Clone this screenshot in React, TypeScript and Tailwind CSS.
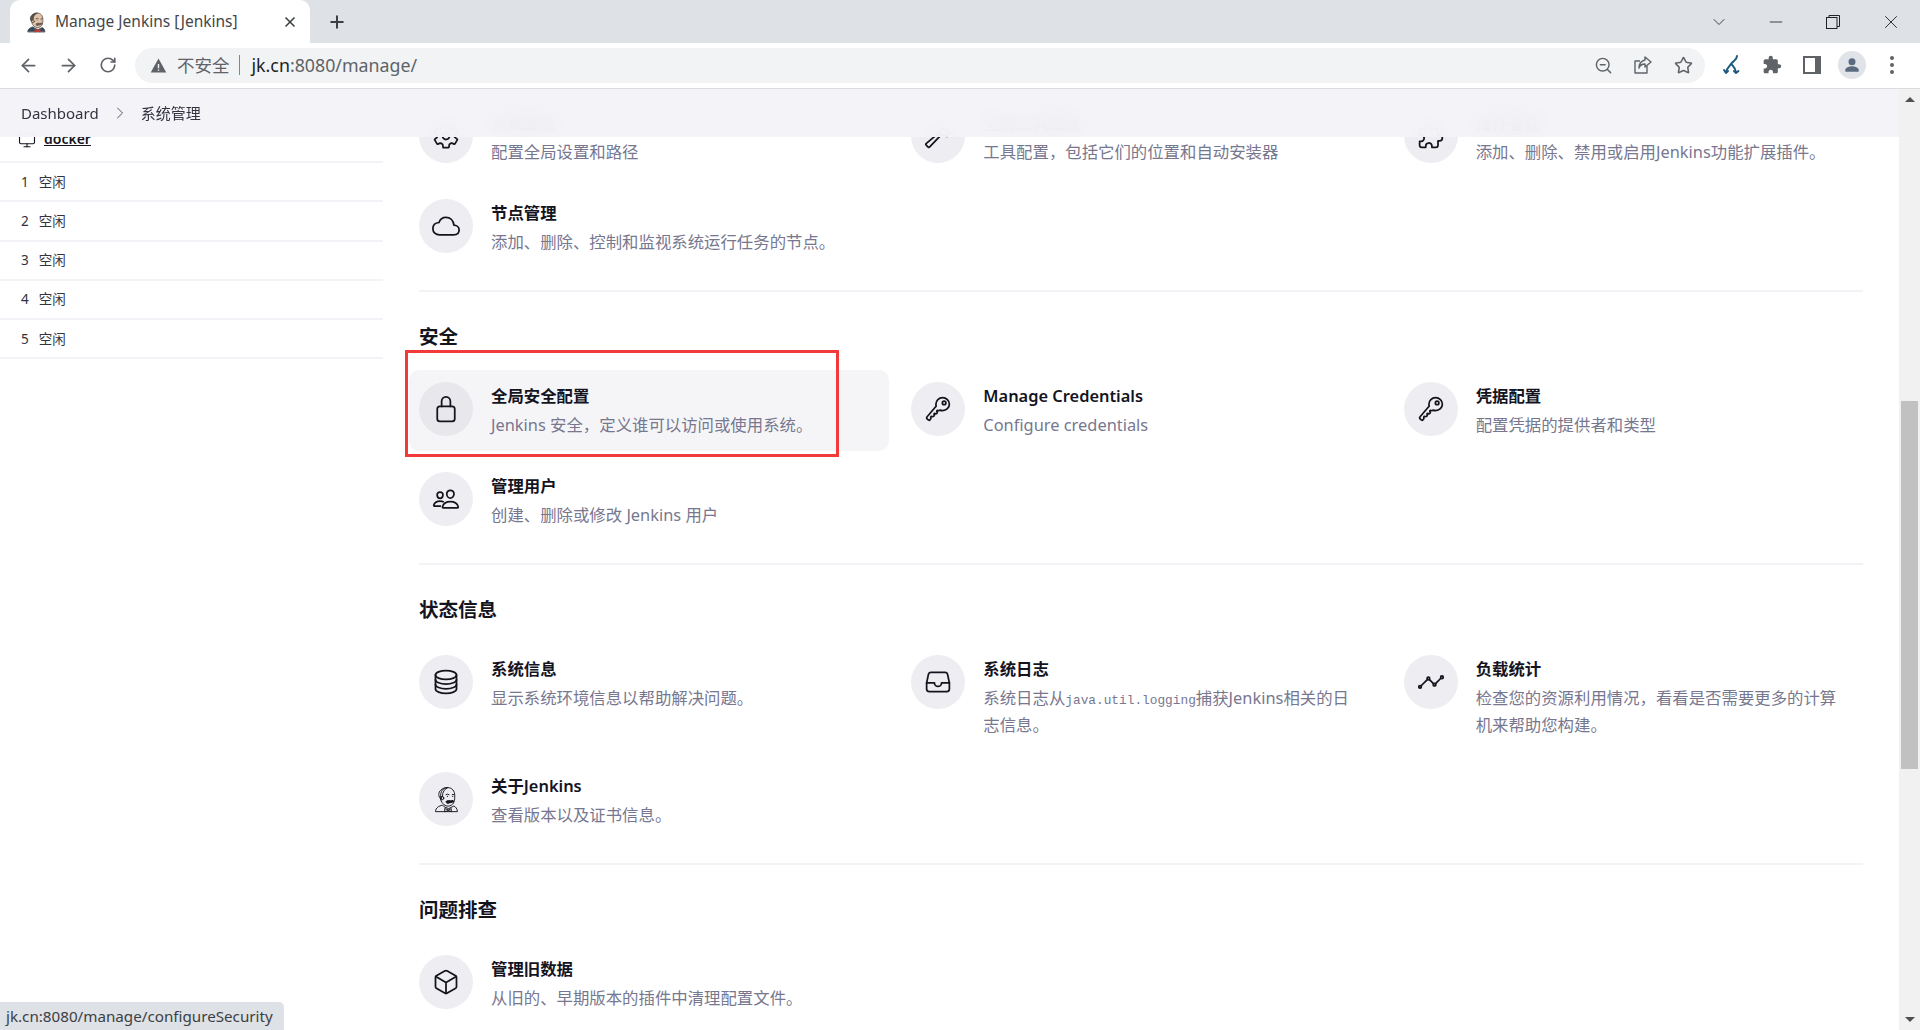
import type { ReactNode } from 'react';
import { ArrowLeft, ArrowRight, ChevronDown, ChevronRight, Minus, Monitor, Plus, RotateCw, Star, X, ZoomOut } from 'lucide-react';

const Ion = ({ children }: { children: ReactNode }) => (
  <svg viewBox="0 0 512 512" className="size-7" fill="none" stroke="#14141f" strokeWidth={32} strokeLinecap="round" strokeLinejoin="round">
    {children}
  </svg>
);

const GearIcon = () => (
  <Ion>
    <path d="M262.29 192.31a64 64 0 1057.4 57.4 64.13 64.13 0 00-57.4-57.4zM416.39 256a154.34 154.34 0 01-1.53 20.79l45.21 35.46a10.81 10.81 0 012.45 13.75l-42.77 74a10.81 10.81 0 01-13.14 4.59l-44.9-18.08a16.11 16.11 0 00-15.17 1.75A164.48 164.48 0 01325 400.8a15.94 15.94 0 00-8.82 12.14l-6.73 47.89a11.08 11.08 0 01-10.68 9.17h-85.54a11.11 11.11 0 01-10.69-8.87l-6.72-47.82a16.07 16.07 0 00-9-12.22 155.3 155.3 0 01-21.46-12.57 16 16 0 00-15.11-1.71l-44.89 18.07a10.81 10.81 0 01-13.14-4.58l-42.77-74a10.8 10.8 0 012.45-13.75l38.21-30a16.05 16.05 0 006-14.08c-.36-4.17-.58-8.33-.58-12.5s.21-8.27.58-12.35a16 16 0 00-6.07-13.94l-38.19-30A10.81 10.81 0 0149.48 186l42.77-74a10.81 10.81 0 0113.14-4.59l44.9 18.08a16.11 16.11 0 0015.17-1.75A164.48 164.48 0 01187 111.2a15.94 15.94 0 008.82-12.14l6.73-47.89A11.08 11.08 0 01213.23 42h85.54a11.11 11.11 0 0110.69 8.87l6.72 47.82a16.07 16.07 0 009 12.22 155.3 155.3 0 0121.46 12.57 16 16 0 0015.11 1.71l44.89-18.07a10.81 10.81 0 0113.14 4.58l42.77 74a10.8 10.8 0 01-2.45 13.75l-38.21 30a16.05 16.05 0 00-6.07 14.08c.33 4.14.55 8.3.55 12.47z" />
  </Ion>
);

const HammerIcon = () => (
  <Ion>
    <path d="M240 225L38 396a16 16 0 00-1 24l39 39a16 16 0 0024-1L287 262" />
    <path d="M240 225l47 37 40-40-47-47zM280 175l40-70 90 40 60 70-50 50-60-30-33 7" />
  </Ion>
);

const PuzzleIcon = () => (
  <Ion>
    <path d="M413.66 246.1H386a2 2 0 01-2-2v-77.24A38.86 38.86 0 00345.14 128H267.9a2 2 0 01-2-2V98.34c0-27.14-21.5-49.86-48.64-50.33a49.53 49.53 0 00-50.4 49.51V126a2 2 0 01-2 2H87.62A39.74 39.74 0 0048 167.62V238a2 2 0 002 2h26.91c29.37 0 53.68 25.48 54.09 54.85.42 29.87-23.51 57.15-53.29 57.15H50a2 2 0 00-2 2v70.38A39.74 39.74 0 0087.62 464H158a2 2 0 002-2v-20.93c0-30.28 24.75-56.35 55-57.06 30.1-.7 57 20.31 57 50.28V462a2 2 0 002 2h71.14A38.86 38.86 0 00384 425.14v-78a2 2 0 012-2h28.48c27.63 0 49.52-22.67 49.52-50.4s-23.2-48.64-50.34-48.64z" />
  </Ion>
);

const CloudIcon = () => (
  <Ion>
    <path d="M400 240c-8.89-89.54-71-144-144-144-69 0-113.44 48.2-128 96C68 198 16 235.59 16 304c0 66 54 112 120 112h260c55 0 100-27.44 100-88 0-59.82-53-85.76-96-88z" />
  </Ion>
);

const LockIcon = () => (
  <Ion>
    <path d="M336 208v-95a80 80 0 00-160 0v95" />
    <rect x="96" y="208" width="320" height="272" rx="48" ry="48" />
  </Ion>
);

const KeyIcon = () => (
  <Ion>
    <path d="M218.1 167.17c0 13 0 25.6 4.1 37.4-43.1 50.6-156.9 184.3-167.5 194.5a20.17 20.17 0 00-6.7 15c0 8.5 5.2 16.7 9.6 21.3 6.6 6.9 34.8 33 40 28 15.4-15 18.5-19 24.8-25.2 9.5-9.3-1-28.3 2.3-36s6.8-9.2 12.5-10.4 15.8 2.9 23.7 3c8.3.1 12.8-3.4 19-9.2 5-4.6 8.6-8.9 8.7-15.6.2-9-12.8-20.9-3.1-30.4s23.7 6.2 34 5 22.8-15.5 24.1-21.6-11.7-21.8-9.7-30.7c.7-3 6.8-10 11.4-11s25 6.9 29.6 5.9c5.6-1.2 12.1-7.1 17.4-10.4 15.5 6.7 29.6 9.4 47.7 9.4 68.5 0 124-53.4 124-119.2S408.5 48 340 48s-121.9 53.37-121.9 119.17zM400 144a32 32 0 11-32-32 32 32 0 0132 32z" />
  </Ion>
);

const PeopleIcon = () => (
  <Ion>
    <path d="M402 168c-2.93 40.67-33.1 72-66 72s-63.12-31.32-66-72c-3-42.31 26.37-72 66-72s69 30.46 66 72z" />
    <path d="M336 304c-65.17 0-127.84 32.37-143.54 95.41-2.08 8.34 3.15 16.59 11.72 16.59h263.65c8.57 0 13.77-8.25 11.72-16.59C463.85 335.36 401.18 304 336 304z" />
    <path d="M200 185.94c-2.34 32.48-26.72 58.06-53 58.06s-50.7-25.57-53-58.06C91.61 152.15 115.34 128 147 128s55.39 24.77 53 57.94z" />
    <path d="M206 306c-18.05-8.27-37.93-11.45-59-11.45-52 0-102.1 25.85-114.65 76.2-1.65 6.66 2.53 13.25 9.37 13.25H154" />
  </Ion>
);

const ServerIcon = () => (
  <Ion>
    <ellipse cx="256" cy="128" rx="192" ry="80" />
    <path d="M448 214c0 44.18-86 80-192 80S64 258.18 64 214" />
    <path d="M448 300c0 44.18-86 80-192 80S64 344.18 64 300" />
    <path d="M64 127.24v257.52C64 428.52 150 464 256 464s192-35.48 192-79.24V127.24" />
  </Ion>
);

const TrayIcon = () => (
  <Ion>
    <path d="M384 80H128c-26 0-43 14-48 40L48 272v112a48.14 48.14 0 0048 48h320a48.14 48.14 0 0048-48V272l-32-152c-5-27-23-40-48-40z" />
    <path d="M48 272h144M320 272h144M192 272a64 64 0 00128 0" />
  </Ion>
);

const AnalyticsIcon = () => (
  <Ion>
    <path d="M344 280l88-88M232 216l64 64M80 320l104-104" />
    <circle cx="456" cy="168" r="24" />
    <circle cx="320" cy="304" r="24" />
    <circle cx="208" cy="192" r="24" />
    <circle cx="56" cy="344" r="24" />
  </Ion>
);

const CubeIcon = () => (
  <Ion>
    <path d="M448 341.37V170.61A32 32 0 00432.11 143l-152-88.46a47.94 47.94 0 00-48.24 0L79.89 143A32 32 0 0064 170.61v170.76A32 32 0 0079.89 369l152 88.46a48 48 0 0048.24 0l152-88.46A32 32 0 00448 341.37z" />
    <path d="M69 153.99l187 110 187-110M256 463.99v-200" />
  </Ion>
);

// butler head, line version for the page and coloured version for the tab
const JenkinsIcon = ({ color, className }: { color?: boolean; className: string }) => (
  <svg viewBox="0 0 32 32" className={className} fill="none" stroke={color ? '#4a4a4a' : '#14141f'} strokeWidth={1.1} strokeLinecap="round" strokeLinejoin="round">
    <path d="M4 30c0-4 4-6 8-7l2 2 5 2 4-2 2-1c2 1 4 3 4 6z" fill={color ? '#2f4a5c' : 'none'} />
    <path d="M10 14C9 7 13 3 18 3c5 0 8 4 8 9 0 5 0 10-6 12-5 1-9-3-10-7z" fill={color ? '#e5c3a6' : 'none'} />
    <path d="M10 16C7 14 7 8 10 6c2-2.500 5-3 8-3-4 2-6 5-6 9z" fill={color ? '#55504c' : 'none'} />
    <circle cx="11.500" cy="15" r="2" fill={color ? '#e5c3a6' : 'none'} />
    <path d="M16 11q2-1.500 3.500 0M23 11q1-1 2 0M17.500 13h.4M23.500 13h.4" />
    <path d="M16 19c2-2 4-1 5-1s3-1 4 .5c-2 2-5 1.500-7 2.500z" fill={color ? '#6b5a50' : '#14141f'} />
    <path d="M15 27l3.500 1.500L22 27v3.500L18.500 29 15 30.500z" fill={color ? '#d33833' : 'none'} stroke={color ? '#d33833' : '#14141f'} />
  </svg>
);

const Item = ({ icon, title, desc, active }: { icon: ReactNode; title: string; desc: ReactNode; active?: boolean }) => (
  <div className={`relative flex items-start gap-[18px] rounded-[10px] pt-3 pb-[13px] pl-[10px] pr-6 ${active ? 'bg-[#f5f5f8]' : ''}`}>
    <div className={`flex size-[54px] shrink-0 items-center justify-center rounded-full ${active ? 'bg-[#e7e7ec]' : 'bg-[#eeeef2]'}`}>{icon}</div>
    <div className="min-w-0">
      <div className="mb-[1px] text-[16.400px] leading-[28px] font-semibold text-[#14141f]">{title}</div>
      <div className="text-[16.400px] leading-[27px] text-[#77778f]">{desc}</div>
    </div>
    {active && <div className="absolute -top-5 -left-1 h-[107px] w-[434px] border-3 border-[#f33a3a]" />}
  </div>
);

const Section = ({ title, children }: { title: string; children: ReactNode }) => (
  <section>
    <div className="mr-[11px] ml-[10px] h-[2px] bg-[#f3f3f7]" />
    <h2 className="mx-[10px] mt-[31px] mb-[19px] text-[19.500px] leading-[28px] font-semibold text-[#14141f]">{title}</h2>
    <Grid>{children}</Grid>
  </section>
);

const Grid = ({ children }: { children: ReactNode }) => <div className="mb-[22px] grid grid-cols-3 gap-x-3 gap-y-[9px]">{children}</div>;

const IdleRow = ({ n }: { n: number }) => (
  <div className="flex h-[39.250px] items-center gap-[10px] border-b-2 border-[#f3f3f7] pl-[21px] text-[13.500px] text-[#333340]">
    <span>{n}</span>
    <span>空闲</span>
  </div>
);

const ToolIcon = ({ children }: { children: ReactNode }) => <div className="flex w-[40px] items-center justify-center text-[#5f6368]">{children}</div>;

export default function App() {
  return (
    <div className="flex h-[1030px] w-[1920px] flex-col overflow-hidden bg-white font-['Noto_Sans','Noto_Sans_CJK_SC',sans-serif]">
      {/* tab strip */}
      <div className="flex h-[43px] shrink-0 bg-[#dee1e6]">
        <div className="ml-[10px] flex h-[43px] w-[300px] items-center rounded-t-[10px] bg-white pr-[12px] pl-[15px]">
          <JenkinsIcon color className="size-[22px] shrink-0" />
          <span className="ml-[8px] flex-1 text-[15.500px] text-[#45474b]">Manage Jenkins [Jenkins]</span>
          <X size={16} strokeWidth={2.5} className="text-[#3c4043]" />
        </div>
        <div className="ml-[17px] flex items-center">
          <Plus size={20} strokeWidth={2.4} className="text-[#3c4043]" />
        </div>
        <div className="ml-auto flex items-center text-[#222]">
          <div className="flex w-[56px] justify-center pl-[2px]"><ChevronDown size={20} strokeWidth={1} /></div>
          <div className="flex w-[58px] justify-center pl-[2px]"><Minus size={20} strokeWidth={1} /></div>
          <div className="flex w-[58px] justify-center">
            <svg viewBox="0 0 14 14" className="size-[14px]" fill="none" stroke="#222" strokeWidth={1}>
              <rect x="0.500" y="2.500" width="10.500" height="11" />
              <path d="M3 2.500V.5h10.500v11H11" />
            </svg>
          </div>
          <div className="flex w-[58px] justify-center pr-[1px]"><X size={22} strokeWidth={1} /></div>
        </div>
      </div>

      {/* toolbar */}
      <div className="flex h-[46px] shrink-0 items-center border-b border-[#dadce0] bg-white pb-[1px]">
        <div className="flex w-[135px] pl-[8px]">
          <ToolIcon><ArrowLeft size={21} strokeWidth={2} /></ToolIcon>
          <ToolIcon><ArrowRight size={21} strokeWidth={2} /></ToolIcon>
          <ToolIcon><RotateCw size={18} strokeWidth={2.2} /></ToolIcon>
        </div>
        <div className="flex h-[35px] w-[1570px] items-center rounded-full bg-[#f1f3f4] pr-[2px] pl-[15px]">
          <svg viewBox="0 0 24 24" className="size-[17px] fill-[#5f6368]">
            <path d="M1 22h22L12 2z" />
            <path d="M11 10h2v6h-2zM11 17.500h2v2h-2z" fill="#f1f3f4" />
          </svg>
          <span className="ml-[10px] text-[17.500px] text-[#5f6368]">不安全</span>
          <span className="ml-[9px] h-[20px] w-px bg-[#80868b]" />
          <span className="ml-[12px] text-[17.800px] text-[#5f6368]">
            <span className="text-[#202124]">jk.cn</span>:8080/manage/
          </span>
          <div className="ml-auto flex">
            <ToolIcon><ZoomOut size={19} strokeWidth={1.8} /></ToolIcon>
            <ToolIcon>
              <svg viewBox="0 0 20 20" className="size-[20px]" fill="none" stroke="#5f6368" strokeWidth={1.4} strokeLinejoin="round">
                <path d="M14 11v7H2V6h5" />
                <path d="M12 2l6 5-6 5V9c-3 0-5 1-6 4 0-5 2-7 6-8z" />
              </svg>
            </ToolIcon>
            <ToolIcon><Star size={19} strokeWidth={2} /></ToolIcon>
          </div>
        </div>
        <div className="ml-[7px] flex items-center">
          <ToolIcon>
            <svg viewBox="0 0 20 20" className="size-[20px]" fill="none" stroke="#1d5a7d" strokeWidth={2} strokeLinecap="round" strokeLinejoin="round">
              <path d="M15 1c0 4-4 5-6 8-1 2-4 4-5 8M9.500 9c1.500 2 4 4 4.500 8" />
              <path d="M2 15l2 3 2-2M12 16l2 2 2.500-2" />
            </svg>
          </ToolIcon>
          <ToolIcon>
            <svg viewBox="0 0 24 24" className="size-[20px] fill-[#5f6368]">
              <path d="M20.5 11H19V7c0-1.100-.9-2-2-2h-4V3.500C13 2.120 11.880 1 10.500 1S8 2.120 8 3.500V5H4c-1.100 0-1.990.9-1.990 2v3.800H3.500c1.490 0 2.700 1.210 2.700 2.700s-1.210 2.700-2.700 2.700H2V20c0 1.100.9 2 2 2h3.800v-1.500c0-1.490 1.210-2.700 2.700-2.700 1.490 0 2.700 1.210 2.700 2.700V22H17c1.100 0 2-.9 2-2v-4h1.500c1.380 0 2.500-1.120 2.500-2.500S21.880 11 20.500 11z" />
            </svg>
          </ToolIcon>
          <ToolIcon>
            <div className="flex h-[18px] w-[18px] bg-[#5f6368] p-[2px] pr-[6px]"><div className="flex-1 bg-white" /></div>
          </ToolIcon>
          <ToolIcon>
            <div className="flex size-[28px] items-center justify-center rounded-full bg-[#e0e3e8]">
              <svg viewBox="0 0 24 24" className="size-[20px] fill-[#5a6b80]">
                <circle cx="12" cy="8" r="4.200" />
                <path d="M4 20v-2c0-3 5-4.500 8-4.500s8 1.500 8 4.500v2z" />
              </svg>
            </div>
          </ToolIcon>
          <ToolIcon>
            <div className="flex flex-col gap-[3px]">
              <span className="size-[4px] rounded-full bg-[#5f6368]" />
              <span className="size-[4px] rounded-full bg-[#5f6368]" />
              <span className="size-[4px] rounded-full bg-[#5f6368]" />
            </div>
          </ToolIcon>
        </div>
      </div>

      {/* page */}
      <div className="relative flex min-h-0 flex-1">
        <div className="flex min-w-0 flex-1 overflow-hidden">
          <aside className="w-[383px] shrink-0">
            <div className="flex h-[74px] items-end gap-[8px] border-b-2 border-[#f3f3f7] pb-[12px] pl-[18px] text-[14px]">
              <Monitor size={18} strokeWidth={1.5} className="text-[#14141f]" />
              <span className="leading-[20px] font-semibold text-[#14141f] underline">docker</span>
            </div>
            {[1, 2, 3, 4, 5].map((n) => (
              <IdleRow key={n} n={n} />
            ))}
          </aside>

          <main className="min-w-0 flex-1 pt-2 pr-[25px] pl-[26px]">
            <Grid>
              <Item icon={<GearIcon />} title="系统配置" desc="配置全局设置和路径" />
              <Item icon={<HammerIcon />} title="全局工具配置" desc="工具配置，包括它们的位置和自动安装器" />
              <Item icon={<PuzzleIcon />} title="插件管理" desc="添加、删除、禁用或启用Jenkins功能扩展插件。" />
              <Item icon={<CloudIcon />} title="节点管理" desc="添加、删除、控制和监视系统运行任务的节点。" />
            </Grid>
            <Section title="安全">
              <Item active icon={<LockIcon />} title="全局安全配置" desc="Jenkins 安全，定义谁可以访问或使用系统。" />
              <Item icon={<KeyIcon />} title="Manage Credentials" desc="Configure credentials" />
              <Item icon={<KeyIcon />} title="凭据配置" desc="配置凭据的提供者和类型" />
              <Item icon={<PeopleIcon />} title="管理用户" desc="创建、删除或修改 Jenkins 用户" />
            </Section>
            <Section title="状态信息">
              <Item icon={<ServerIcon />} title="系统信息" desc="显示系统环境信息以帮助解决问题。" />
              <Item
                icon={<TrayIcon />}
                title="系统日志"
                desc={
                  <>
                    系统日志从<code className="font-['Liberation_Mono',monospace] text-[12.800px] leading-none">java.util.logging</code>捕获Jenkins相关的日志信息。
                  </>
                }
              />
              <Item icon={<AnalyticsIcon />} title="负载统计" desc="检查您的资源利用情况，看看是否需要更多的计算机来帮助您构建。" />
              <Item icon={<JenkinsIcon className="size-7" />} title="关于Jenkins" desc="查看版本以及证书信息。" />
            </Section>
            <Section title="问题排查">
              <Item icon={<CubeIcon />} title="管理旧数据" desc="从旧的、早期版本的插件中清理配置文件。" />
            </Section>
          </main>
        </div>

        {/* scrollbar */}
        <div className="flex w-[21px] shrink-0 flex-col bg-[#f1f1f1]">
          <div className="flex h-[21px] items-center justify-center">
            <div className="h-0 w-0 border-x-[5px] border-b-[5px] border-x-transparent border-b-[#505050]" />
          </div>
          <div className="mx-[2px] mt-[291px] h-[368px] bg-[#c1c1c1]" />
          <div className="mt-auto flex h-[21px] items-center justify-center">
            <div className="h-0 w-0 border-x-[5px] border-t-[5px] border-x-transparent border-t-[#505050]" />
          </div>
        </div>

        {/* sticky breadcrumb over the scrolled page */}
        <div className="absolute top-0 right-[21px] left-0 flex h-[48px] items-center bg-[#f3f3f8]/95 pl-[21px] text-[15px] text-[#333340] backdrop-blur-md">
          <span>Dashboard</span>
          <ChevronRight size={20} strokeWidth={1.2} className="mx-[11px] text-[#555]" />
          <span>系统管理</span>
        </div>

        {/* link preview bubble */}
        <div className="absolute bottom-0 left-0 flex h-[28px] w-[284px] items-center rounded-tr-[5px] bg-[#dee1e6] pl-[6px] text-[15.200px] text-[#3c4043]">
          jk.cn:8080/manage/configureSecurity
        </div>
      </div>
    </div>
  );
}
